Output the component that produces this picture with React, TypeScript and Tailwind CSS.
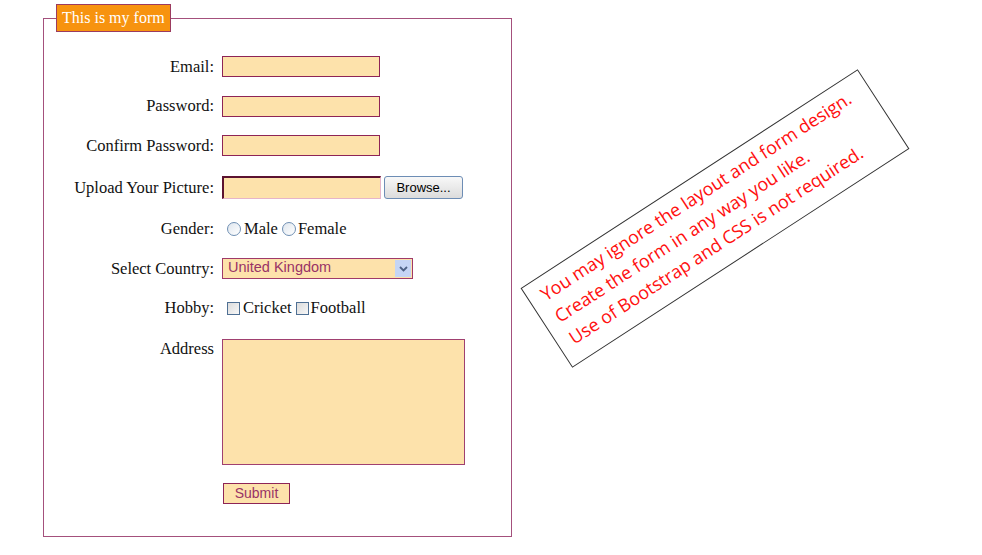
import React from "react";

const serif = { fontFamily: '"Liberation Serif", "Times New Roman", serif' };

function Label({ children }: { children: React.ReactNode }) {
  return (
    <div className="w-[158px] shrink-0 text-right text-[16.5px] leading-[18px] text-[#111]" style={serif}>
      {children}
    </div>
  );
}

function Radio() {
  return (
    <span className="inline-block w-[14px] h-[14px] rounded-full border border-[#6f8fb3] bg-gradient-to-br from-[#dfe6ee] to-[#ffffff] shrink-0" />
  );
}

function Check() {
  return (
    <span className="inline-block w-[13px] h-[13px] border border-[#4f7094] bg-gradient-to-br from-[#dcdcdc] to-[#f7f7f7] shrink-0" />
  );
}

export default function App() {
  return (
    <div className="relative w-[982px] h-[555px] bg-white overflow-hidden">
      <fieldset className="ml-[43px] mt-[4px] w-[469px] border border-[#a4507c] pl-[12px] pr-[12px] pt-[15px] pb-[32px]">
        <legend
          className="bg-[#f7930f] border border-[#9b3b60] text-white text-[16px] leading-[26px] px-[5px] h-[28px]"
          style={serif}
        >
          This is my form
        </legend>

        <div className="flex items-center gap-[8px] h-[39px]">
          <Label>Email:</Label>
          <input className="w-[158px] h-[21px] bg-[#fde2ab] border border-[#8e2456] outline-none" />
        </div>
        <div className="flex items-center gap-[8px] h-[40px]">
          <Label>Password:</Label>
          <input type="password" className="w-[158px] h-[21px] bg-[#fde2ab] border border-[#8e2456] outline-none" />
        </div>
        <div className="flex items-center gap-[8px] h-[39px]">
          <Label>Confirm Password:</Label>
          <input type="password" className="w-[158px] h-[21px] bg-[#fde2ab] border border-[#8e2456] outline-none" />
        </div>
        <div className="flex items-center gap-[8px] h-[45px]">
          <Label>Upload Your Picture:</Label>
          <div className="flex items-center gap-[3px]">
            <div className="w-[159px] h-[23px] bg-[#fde2ab] border-t-2 border-l-2 border-b border-r border-t-[#5c1230] border-l-[#5c1230] border-b-[#e6b5c9] border-r-[#e6b5c9]" />
            <button
              className="w-[79px] h-[23px] rounded-[3px] border border-[#6d8db5] bg-gradient-to-b from-[#f8f8f8] to-[#dcdcdc] text-[13px] text-black"
              style={{ fontFamily: '"Liberation Sans", Arial, sans-serif' }}
            >
              Browse...
            </button>
          </div>
        </div>
        <div className="flex items-center gap-[8px] h-[38px]">
          <Label>Gender:</Label>
          <div className="flex items-center text-[16.5px] text-[#111]" style={serif}>
            <span className="ml-[5px] mr-[3px] flex"><Radio /></span>
            <span>Male</span>
            <span className="ml-[4px] mr-[2px] flex"><Radio /></span>
            <span>Female</span>
          </div>
        </div>
        <div className="flex items-center gap-[8px] h-[41px]">
          <Label>Select Country:</Label>
          <div className="relative w-[191px] h-[21px] bg-[#fde2ab] border border-[#a03a68]">
            <select
              className="appearance-none block w-full h-[19px] bg-transparent pl-[5px] py-0 text-[14.5px] leading-[16px] pb-[3px] text-[#993366] outline-none"
              style={{ fontFamily: '"Liberation Sans", Arial, sans-serif' }}
              defaultValue="uk"
            >
              <option value="uk">United Kingdom</option>
              <option value="us">United States</option>
              <option value="in">India</option>
            </select>
            <div className="absolute right-[1px] top-[1px] w-[16px] h-[17px] bg-[#c5d5f5] flex items-center justify-center pointer-events-none">
              <svg width="9" height="6" viewBox="0 0 9 6">
                <path d="M1 1 L4.5 4.5 L8 1" stroke="#4d6185" strokeWidth="1.8" fill="none" />
              </svg>
            </div>
          </div>
        </div>
        <div className="flex items-center gap-[8px] h-[38px]">
          <Label>Hobby:</Label>
          <div className="flex items-center text-[16.5px] text-[#111]" style={serif}>
            <span className="ml-[5px] mr-[3px] flex"><Check /></span>
            <span>Cricket</span>
            <span className="ml-[4px] mr-[2px] flex"><Check /></span>
            <span>Football</span>
          </div>
        </div>
        <div className="flex items-start gap-[8px] mt-[12px]">
          <div className="pt-[1px]">
            <Label>Address</Label>
          </div>
          <textarea className="w-[243px] h-[126px] bg-[#fde2ab] border border-[#a04070] resize-none outline-none" />
        </div>
        <div className="flex gap-[8px] mt-[18px]">
          <div className="w-[158px] shrink-0" />
          <button
            className="ml-[1px] w-[67px] h-[21px] bg-[#fde2ab] border border-[#8e2456] text-[14px] text-[#993366] leading-[19px]"
            style={{ fontFamily: '"Liberation Sans", Arial, sans-serif' }}
          >
            Submit
          </button>
        </div>
      </fieldset>

      <div
        className="absolute left-[513.5px] top-[171px] w-[402px] h-[95px] border border-[#333] bg-white pl-[13px] pt-[4px] text-[#ff1010] text-[18px] leading-[26px] -rotate-[33deg]"
        style={{ fontFamily: '"Open Sans", "Noto Sans", sans-serif' }}
      >
        <div className="whitespace-nowrap">You may ignore the layout and form design.</div>
        <div className="whitespace-nowrap">Create the form in any way you like.</div>
        <div className="whitespace-nowrap">Use of Bootstrap and CSS is not required.</div>
      </div>
    </div>
  );
}
